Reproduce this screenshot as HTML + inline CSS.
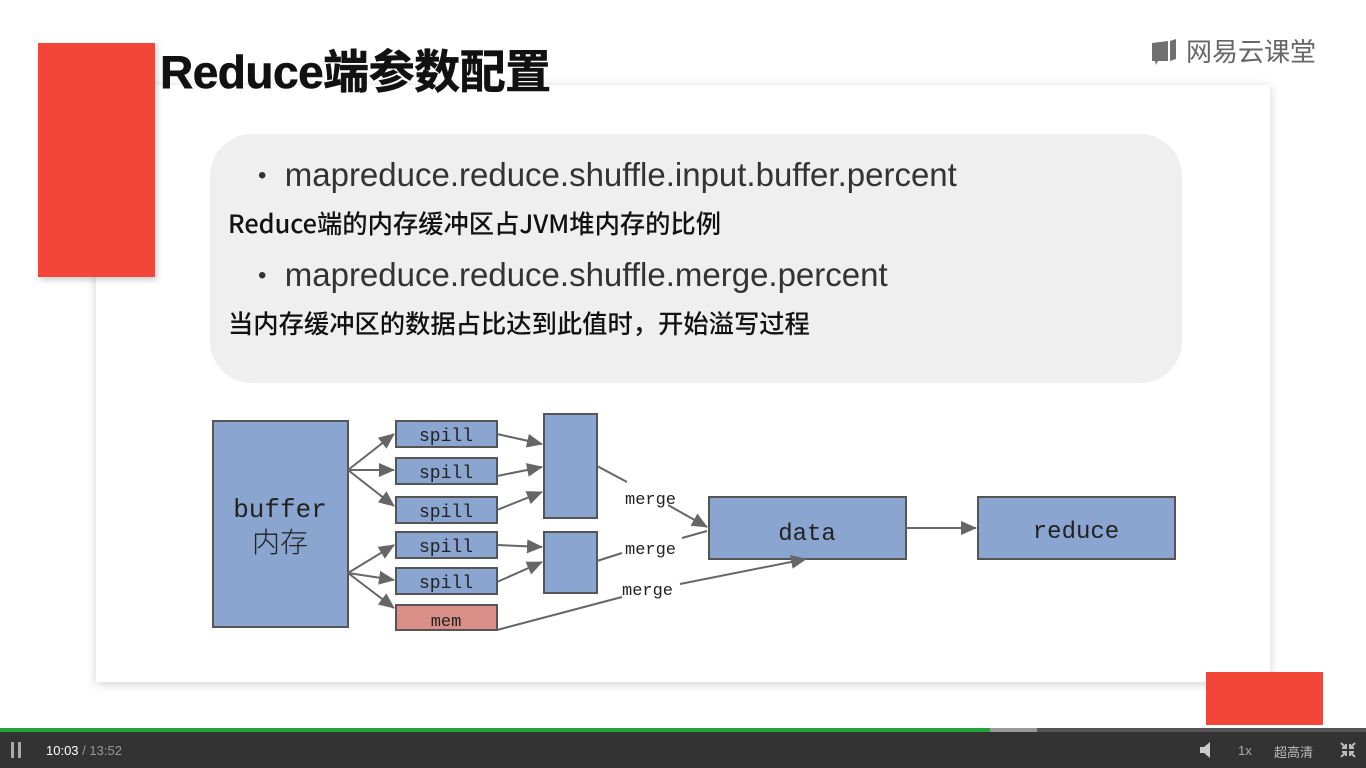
<!DOCTYPE html>
<html><head><meta charset="utf-8"><style>
body{margin:0;width:1366px;height:768px;overflow:hidden;background:#fff;position:relative;font-family:"Liberation Sans","Noto Sans CJK SC",sans-serif}
.abs{position:absolute}
.card{left:96px;top:85px;width:1174px;height:597px;background:#fff;box-shadow:0 2px 10px rgba(0,0,0,.18)}
.red{background:#f44638}
.box{left:210px;top:134px;width:972px;height:249px;background:#efefef;border-radius:42px}
.t{color:#111;white-space:nowrap}
.cn{font-family:"Noto Sans CJK SC",sans-serif;font-weight:500;font-size:25.3px;color:#111}
</style></head><body>
<div class="abs card"></div>
<div class="abs red" style="left:38px;top:43px;width:117px;height:234px;box-shadow:2px 3px 6px rgba(0,0,0,.2)"></div>
<div class="abs t" style="left:160px;top:36px;font-size:46px;font-weight:bold;letter-spacing:-0.5px;-webkit-text-stroke:0.6px #111">Reduce端参数配置</div>
<div class="abs" style="left:1150px;top:32px;color:#666;font-size:26px;display:flex;align-items:center;gap:6px">
<svg width="30" height="28"><path d="M2 6 L18 4 L18 24 L8 24 L6 28 L5 24 L2 24Z" fill="#707070"/><path d="M20 4 L26 2 L26 22 L20 24Z" fill="#707070"/></svg><span>网易云课堂</span></div>
<div class="abs box"></div>
<div class="abs t" style="left:258px;top:156px;font-size:33px;color:#333"><span style="font-size:24px;vertical-align:3px">•</span>&nbsp;&nbsp;mapreduce.reduce.shuffle.input.buffer.percent</div>
<div class="abs t cn" style="left:228px;top:205px">Reduce端的内存缓冲区占JVM堆内存的比例</div>
<div class="abs t" style="left:258px;top:256px;font-size:33px;color:#333"><span style="font-size:24px;vertical-align:3px">•</span>&nbsp;&nbsp;mapreduce.reduce.shuffle.merge.percent</div>
<div class="abs t cn" style="left:228px;top:305px">当内存缓冲区的数据占比达到此值时，开始溢写过程</div>
<svg class="abs" style="left:0;top:0" width="1366" height="768">
<defs><marker id="b" markerWidth="16" markerHeight="14" refX="15" refY="7" orient="auto" markerUnits="userSpaceOnUse"><path d="M0 0L16 7L0 14Z" fill="#666"/></marker></defs>
<g stroke="#555" stroke-width="2" fill="#8aa5d0">
<rect x="213" y="421" width="135" height="206"/>
<rect x="396" y="421" width="101" height="26"/><rect x="396" y="458" width="101" height="26"/><rect x="396" y="497" width="101" height="26"/>
<rect x="396" y="532" width="101" height="26"/><rect x="396" y="568" width="101" height="26"/>
<rect x="396" y="605" width="101" height="25" fill="#d98e87"/>
<rect x="544" y="414" width="53" height="104"/><rect x="544" y="532" width="53" height="61"/>
<rect x="709" y="497" width="197" height="62"/><rect x="978" y="497" width="197" height="62"/>
</g>
<g stroke="#666" stroke-width="2" fill="none" marker-end="url(#b)">
<path d="M348 470L394 434"/><path d="M348 470L394 470"/><path d="M348 470L394 506"/>
<path d="M348 573L394 545"/><path d="M348 573L394 580"/><path d="M348 573L394 608"/>
<path d="M497 434L542 444"/><path d="M497 476L542 467"/><path d="M497 510L542 492"/>
<path d="M497 545L542 547"/><path d="M497 582L542 562"/>
<path d="M668 505L707 527"/><path d="M906 528L976 528"/><path d="M680 584L806 559"/>
</g>
<g stroke="#666" stroke-width="2"><path d="M597 466L627 482"/><path d="M597 561L622 553"/><path d="M497 630L622 597"/><path d="M682 538L707 531"/></g>
<g font-family="Liberation Mono,'Noto Sans CJK SC',monospace" fill="#222">
<text x="446" y="441" font-size="18" text-anchor="middle">spill</text><text x="446" y="478" font-size="18" text-anchor="middle">spill</text><text x="446" y="517" font-size="18" text-anchor="middle">spill</text><text x="446" y="552" font-size="18" text-anchor="middle">spill</text><text x="446" y="588" font-size="18" text-anchor="middle">spill</text><text x="446" y="626" font-size="17" text-anchor="middle">mem</text>
<text x="280" y="517" font-size="26" text-anchor="middle">buffer</text><text x="280" y="552" font-size="28" text-anchor="middle" font-family="Noto Sans CJK SC,sans-serif" font-weight="300">内存</text>
<text x="625" y="504" font-size="17">merge</text><text x="625" y="554" font-size="17">merge</text><text x="622" y="595" font-size="17">merge</text>
<text x="807" y="540" font-size="24" text-anchor="middle">data</text><text x="1076" y="538" font-size="24" text-anchor="middle">reduce</text>
</g>
</svg>
<div class="abs red" style="left:1206px;top:672px;width:117px;height:53px"></div>
<div class="abs" style="left:0;top:728px;width:1366px;height:4px;background:#555"></div>
<div class="abs" style="left:0;top:728px;width:990px;height:4px;background:#22a33a"></div>
<div class="abs" style="left:990px;top:728px;width:47px;height:4px;background:#999"></div>
<div class="abs" style="left:0;top:732px;width:1366px;height:36px;background:#333;color:#ccc;font-size:13px">
<div class="abs" style="left:11px;top:10px;width:3px;height:16px;background:#aaa"></div><div class="abs" style="left:18px;top:10px;width:3px;height:16px;background:#aaa"></div>
<div class="abs" style="left:46px;top:11px"><span style="color:#fff">10:03</span> <span style="color:#999">/ 13:52</span></div>
<svg class="abs" style="left:1198px;top:9px" width="18" height="18"><path d="M2 6h4l6-5v16l-6-5H2z" fill="#ccc"/></svg>
<div class="abs" style="left:1238px;top:11px;color:#aaa">1x</div>
<div class="abs" style="left:1274px;top:10px;color:#bbb">超高清</div>
<svg class="abs" style="left:1340px;top:10px" width="16" height="16" stroke="#bbb" stroke-width="2" fill="none"><path d="M1 1l5 5M6 2v4H2M15 1l-5 5M10 2v4h4M1 15l5-5M6 14v-4H2M15 15l-5-5M10 14v-4h4"/></svg>
</div>
</body></html>
